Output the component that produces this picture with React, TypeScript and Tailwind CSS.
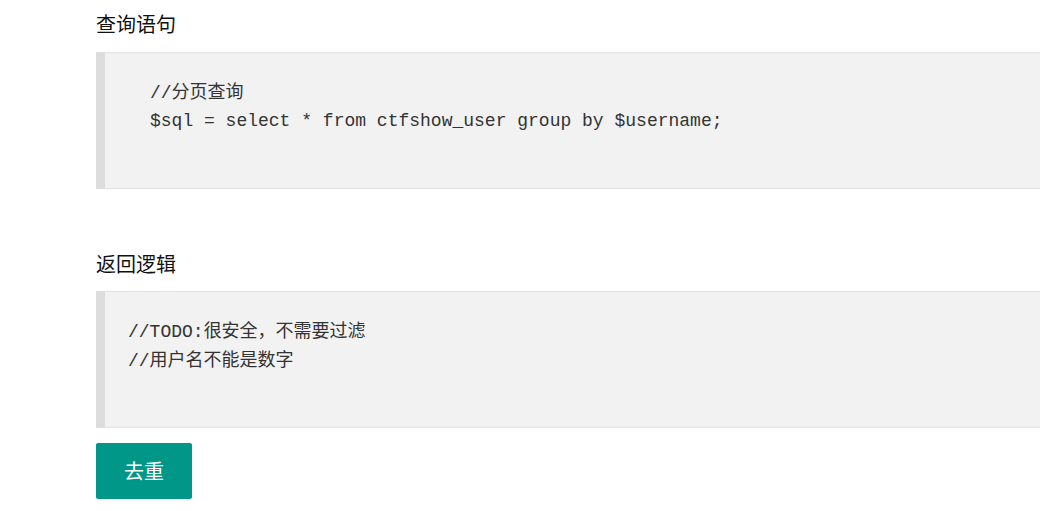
export default function App() {
  const cjk = "font-['Microsoft_YaHei','Noto_Sans_CJK_SC',sans-serif]";
  const mono = "font-['Courier_New','Liberation_Mono','Noto_Sans_CJK_SC',monospace]";

  return (
    <div className={`w-[1040px] h-[511px] overflow-hidden bg-white text-[#333] ${cjk}`}>
      <div className="pl-[96px]">
        {/* 查询语句 */}
        <h2 className="mt-[10px] text-[20px] leading-[28px] text-[#111] font-normal">查询语句</h2>
        <div className="mt-[14px] w-[1000px] h-[137px] bg-[#f2f2f2] border-y border-[#e2e2e2] border-l-[9px] border-l-[#ddd] pl-[45px] pt-[22px]">
          <div className={`${mono} text-[18px] text-[#333] whitespace-pre`}>
            <div className="h-[31px] leading-[31px] overflow-hidden">
              //<span className={cjk}>分页查询</span>
            </div>
            <div className="h-[31px] leading-[31px]">$sql = select * from ctfshow_user group by $username;</div>
          </div>
        </div>

        {/* 返回逻辑 */}
        <h2 className="mt-[61px] text-[20px] leading-[28px] text-[#111] font-normal">返回逻辑</h2>
        <div className="mt-[13px] w-[1000px] h-[137px] bg-[#f2f2f2] border-y border-[#e2e2e2] border-l-[9px] border-l-[#ddd] pl-[23px] pt-[23px]">
          <div className={`${mono} text-[18px] text-[#333] whitespace-pre`}>
            <div className="h-[29px] leading-[29px] overflow-hidden">
              //TODO:<span className={cjk}>很安全，不需要过滤</span>
            </div>
            <div className="h-[29px] leading-[29px] overflow-hidden">
              //<span className={cjk}>用户名不能是数字</span>
            </div>
          </div>
        </div>

        <button className="mt-[15px] w-[96px] h-[56px] rounded-[2px] bg-[#009688] text-white text-[20px] leading-none">
          去重
        </button>
      </div>
    </div>
  );
}
